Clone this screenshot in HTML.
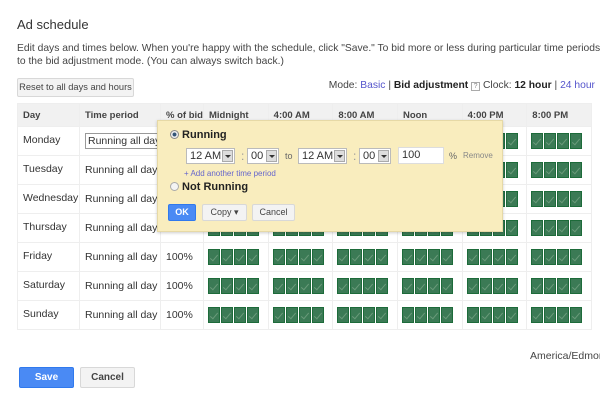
<!DOCTYPE html>
<html><head><style>
*{box-sizing:border-box;margin:0;padding:0}
html,body{width:600px;height:406px;overflow:hidden}
body{background:#fff;font-family:"Liberation Sans",Arial,sans-serif;color:#333;position:relative;font-size:12px}
.a{position:absolute;white-space:nowrap}
table{position:absolute;left:17px;top:103px;border-collapse:collapse;width:575px;table-layout:fixed;border:1px solid #ddd}
td,th{border:1px solid #eee;height:29px;font-size:10.5px;text-align:left;vertical-align:middle;padding-left:5px;color:#333;white-space:nowrap;overflow:hidden}
th{background:#f1f1f1;height:23px;font-weight:bold;color:#444;font-size:9.5px}
td.d{vertical-align:top;padding-top:7px}
.g{display:inline-block;width:12px;height:16px;background:#3b7a55;border:1px solid #1d6b3a;margin-right:1px;vertical-align:middle;position:relative}
.g:after{content:"";position:absolute;left:3px;top:3px;width:3px;height:7px;border-right:1px solid #6a9a7a;border-bottom:1px solid #6a9a7a;transform:rotate(40deg)}
.sq{padding-left:4px}
.btn{position:absolute;border:1px solid #d8d8d8;background:#f3f3f3;border-radius:2px;font-size:11px;color:#444;text-align:center;white-space:nowrap}
.sel{position:absolute;height:16px;border:1px solid #bbb;background:#fff;font-size:11px;padding-left:3px;line-height:14px;color:#333;white-space:nowrap;overflow:hidden}
.sel i{position:absolute;right:1px;top:1px;width:11px;height:12px;background:#ddd;border:1px solid #aaa}
.sel i:after{content:"";position:absolute;left:2px;top:4px;border:3px solid transparent;border-top:3px solid #333}
.clip{position:absolute;left:0;top:0;width:600px;height:406px;overflow:hidden}
</style></head><body><div class="clip">
<div class="a" style="left:17px;top:17px;font-size:13px;color:#333">Ad schedule</div>
<div class="a" style="left:17px;top:42px;font-size:10.3px;color:#444;line-height:13px">Edit days and times below. When you're happy with the schedule, click "Save." To bid more or less during particular time periods, switch<br>to the bid adjustment mode. (You can always switch back.)</div>
<div class="btn" style="left:17px;top:78px;width:117px;height:19px;line-height:17px;font-size:9.3px">Reset to all days and hours</div>
<div class="a" style="right:5px;top:80px;font-size:10.3px;color:#444">Mode: <span style="color:#55c">Basic</span> | <b style="color:#222">Bid adjustment</b> <span style="display:inline-block;width:9px;height:9px;border:1px solid #aaa;font-size:7px;line-height:8px;text-align:center;color:#888">?</span> Clock: <b style="color:#222">12 hour</b> | <span style="color:#55c">24 hour</span></div>
<table>
<colgroup><col style="width:62px"><col style="width:81px"><col style="width:43px"><col><col><col><col><col><col></colgroup>
<tr><th>Day</th><th>Time period</th><th>% of bid</th><th>Midnight</th><th>4:00 AM</th><th>8:00 AM</th><th>Noon</th><th>4:00 PM</th><th>8:00 PM</th></tr>
<tr><td class="d">Monday</td><td><span style="border:1px solid #999;padding:1px 2px">Running all day</span></td><td></td><td></td><td></td><td></td><td></td><td class="sq"><span class="g"></span><span class="g"></span><span class="g"></span><span class="g"></span></td><td class="sq"><span class="g"></span><span class="g"></span><span class="g"></span><span class="g"></span></td></tr>
<tr><td class="d">Tuesday</td><td>Running all day</td><td>100%</td><td class="sq"><span class="g"></span><span class="g"></span><span class="g"></span><span class="g"></span></td><td class="sq"><span class="g"></span><span class="g"></span><span class="g"></span><span class="g"></span></td><td class="sq"><span class="g"></span><span class="g"></span><span class="g"></span><span class="g"></span></td><td class="sq"><span class="g"></span><span class="g"></span><span class="g"></span><span class="g"></span></td><td class="sq"><span class="g"></span><span class="g"></span><span class="g"></span><span class="g"></span></td><td class="sq"><span class="g"></span><span class="g"></span><span class="g"></span><span class="g"></span></td></tr>
<tr><td class="d">Wednesday</td><td>Running all day</td><td>100%</td><td class="sq"><span class="g"></span><span class="g"></span><span class="g"></span><span class="g"></span></td><td class="sq"><span class="g"></span><span class="g"></span><span class="g"></span><span class="g"></span></td><td class="sq"><span class="g"></span><span class="g"></span><span class="g"></span><span class="g"></span></td><td class="sq"><span class="g"></span><span class="g"></span><span class="g"></span><span class="g"></span></td><td class="sq"><span class="g"></span><span class="g"></span><span class="g"></span><span class="g"></span></td><td class="sq"><span class="g"></span><span class="g"></span><span class="g"></span><span class="g"></span></td></tr>
<tr><td class="d">Thursday</td><td>Running all day</td><td>100%</td><td class="sq"><span class="g"></span><span class="g"></span><span class="g"></span><span class="g"></span></td><td class="sq"><span class="g"></span><span class="g"></span><span class="g"></span><span class="g"></span></td><td class="sq"><span class="g"></span><span class="g"></span><span class="g"></span><span class="g"></span></td><td class="sq"><span class="g"></span><span class="g"></span><span class="g"></span><span class="g"></span></td><td class="sq"><span class="g"></span><span class="g"></span><span class="g"></span><span class="g"></span></td><td class="sq"><span class="g"></span><span class="g"></span><span class="g"></span><span class="g"></span></td></tr>
<tr><td class="d">Friday</td><td>Running all day</td><td>100%</td><td class="sq"><span class="g"></span><span class="g"></span><span class="g"></span><span class="g"></span></td><td class="sq"><span class="g"></span><span class="g"></span><span class="g"></span><span class="g"></span></td><td class="sq"><span class="g"></span><span class="g"></span><span class="g"></span><span class="g"></span></td><td class="sq"><span class="g"></span><span class="g"></span><span class="g"></span><span class="g"></span></td><td class="sq"><span class="g"></span><span class="g"></span><span class="g"></span><span class="g"></span></td><td class="sq"><span class="g"></span><span class="g"></span><span class="g"></span><span class="g"></span></td></tr>
<tr><td class="d">Saturday</td><td>Running all day</td><td>100%</td><td class="sq"><span class="g"></span><span class="g"></span><span class="g"></span><span class="g"></span></td><td class="sq"><span class="g"></span><span class="g"></span><span class="g"></span><span class="g"></span></td><td class="sq"><span class="g"></span><span class="g"></span><span class="g"></span><span class="g"></span></td><td class="sq"><span class="g"></span><span class="g"></span><span class="g"></span><span class="g"></span></td><td class="sq"><span class="g"></span><span class="g"></span><span class="g"></span><span class="g"></span></td><td class="sq"><span class="g"></span><span class="g"></span><span class="g"></span><span class="g"></span></td></tr>
<tr><td class="d">Sunday</td><td>Running all day</td><td>100%</td><td class="sq"><span class="g"></span><span class="g"></span><span class="g"></span><span class="g"></span></td><td class="sq"><span class="g"></span><span class="g"></span><span class="g"></span><span class="g"></span></td><td class="sq"><span class="g"></span><span class="g"></span><span class="g"></span><span class="g"></span></td><td class="sq"><span class="g"></span><span class="g"></span><span class="g"></span><span class="g"></span></td><td class="sq"><span class="g"></span><span class="g"></span><span class="g"></span><span class="g"></span></td><td class="sq"><span class="g"></span><span class="g"></span><span class="g"></span><span class="g"></span></td></tr>
</table>
<div class="a" style="left:157px;top:120px;width:346px;height:112px;background:#f9edbe;border:1px solid #e6d9a6;box-shadow:0 1px 3px rgba(0,0,0,.2)"></div>
<div class="a" style="left:170px;top:129px;font-size:11px;font-weight:bold;color:#222"><span style="display:inline-block;width:9px;height:9px;border-radius:50%;border:1px solid #888;background:radial-gradient(#357 35%,#eee 45%);vertical-align:-1px"></span> Running</div>
<div class="sel" style="left:186px;top:148px;width:49px">12 AM<i></i></div>
<div class="a" style="left:241px;top:149px;color:#999">:</div>
<div class="sel" style="left:247px;top:148px;width:32px">00<i></i></div>
<div class="a" style="left:285px;top:151px;font-size:9px;color:#666">to</div>
<div class="sel" style="left:298px;top:148px;width:49px">12 AM<i></i></div>
<div class="a" style="left:353px;top:149px;color:#999">:</div>
<div class="sel" style="left:359px;top:148px;width:32px">00<i></i></div>
<div class="sel" style="left:398px;top:147px;width:46px;height:17px;border-color:#ddd">100</div>
<div class="a" style="left:449px;top:151px;font-size:9px;color:#666">%</div>
<div class="a" style="left:463px;top:151px;font-size:8px;color:#888">Remove</div>
<div class="a" style="left:184px;top:169px;font-size:8px;color:#66c">+ Add another time period</div>
<div class="a" style="left:170px;top:181px;font-size:11px;font-weight:bold;color:#222"><span style="display:inline-block;width:9px;height:9px;border-radius:50%;border:1px solid #aaa;background:#f4f4f4;vertical-align:-1px"></span> Not Running</div>
<div class="btn" style="left:168px;top:204px;width:28px;height:17px;line-height:15px;background:#4a8af4;border-color:#3079ed;color:#fff;font-weight:bold;font-size:9px">OK</div>
<div class="btn" style="left:202px;top:204px;width:45px;height:17px;line-height:15px;font-size:9px">Copy &#9662;</div>
<div class="btn" style="left:252px;top:204px;width:43px;height:17px;line-height:15px;font-size:9px">Cancel</div>
<div class="a" style="left:530px;top:350px;font-size:10.5px;color:#444">America/Edmonton</div>
<div class="btn" style="left:19px;top:367px;width:55px;height:21px;line-height:19px;background:#4a8af4;border-color:#3079ed;color:#fff;font-weight:bold;font-size:10px">Save</div>
<div class="btn" style="left:80px;top:367px;width:55px;height:21px;line-height:19px;font-weight:bold;font-size:10px">Cancel</div>
</div></body></html>
